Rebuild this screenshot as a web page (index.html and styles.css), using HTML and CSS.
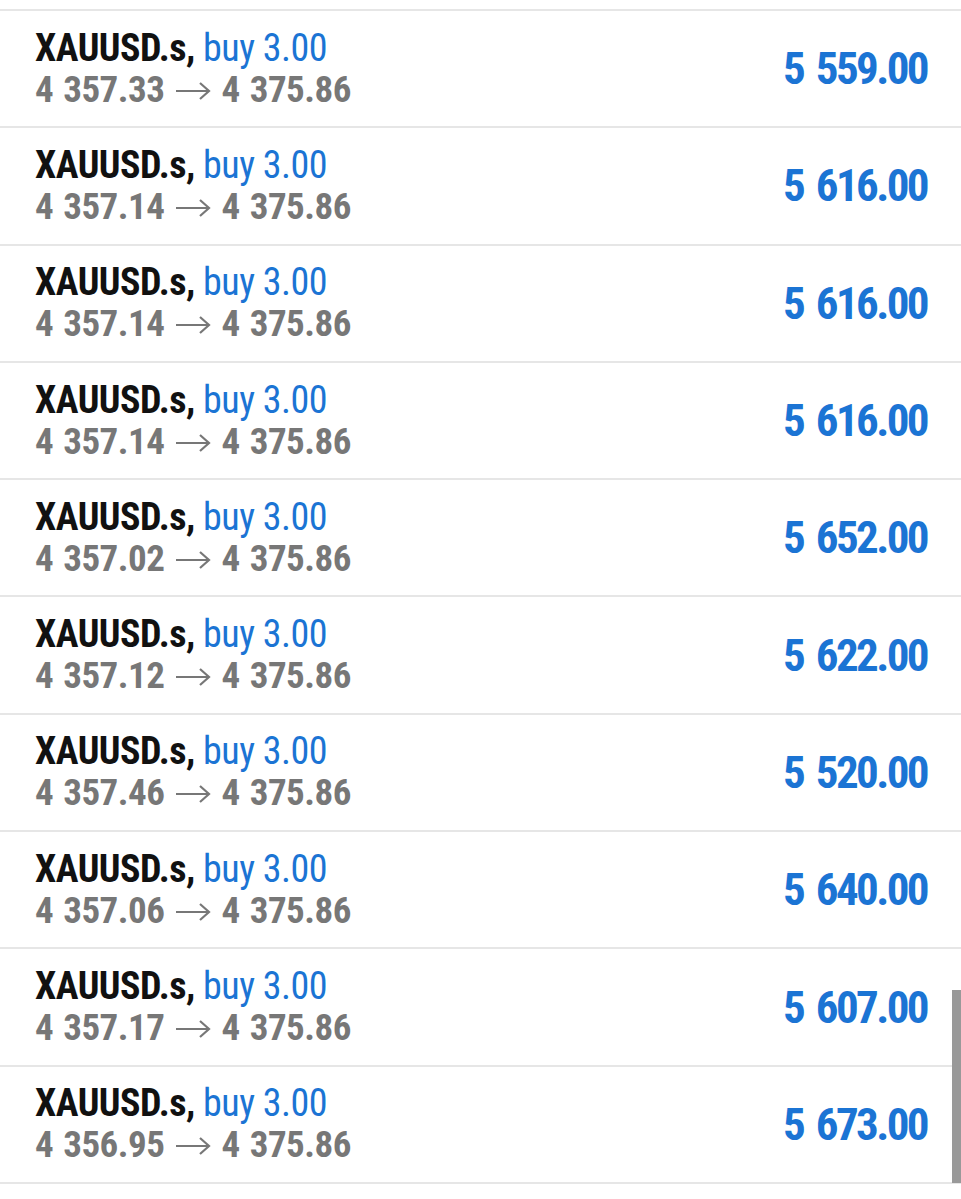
FILE: index.html
```html
<!DOCTYPE html>
<html lang="en">
<head>
  <meta charset="UTF-8">
  <meta name="viewport" content="width=device-width, initial-scale=1.0">
  <title>Positions</title>
  <link rel="stylesheet" href="styles.css">
</head>
<body>
  <div class="list">
    <!-- positions -->
    <div class="row">
      <div class="info">
        <div class="title"><span class="symbol">XAUUSD.s,</span> <span class="side">buy 3.00</span></div>
        <div class="prices">4 357.33<svg class="arrow" viewBox="0 0 36 20"><path d="M1 10H34M25 2L34 10L25 18"/></svg>4 375.86</div>
      </div>
      <div class="profit">5 559.00</div>
    </div>
    <div class="row">
      <div class="info">
        <div class="title"><span class="symbol">XAUUSD.s,</span> <span class="side">buy 3.00</span></div>
        <div class="prices">4 357.14<svg class="arrow" viewBox="0 0 36 20"><path d="M1 10H34M25 2L34 10L25 18"/></svg>4 375.86</div>
      </div>
      <div class="profit">5 616.00</div>
    </div>
    <div class="row">
      <div class="info">
        <div class="title"><span class="symbol">XAUUSD.s,</span> <span class="side">buy 3.00</span></div>
        <div class="prices">4 357.14<svg class="arrow" viewBox="0 0 36 20"><path d="M1 10H34M25 2L34 10L25 18"/></svg>4 375.86</div>
      </div>
      <div class="profit">5 616.00</div>
    </div>
    <div class="row">
      <div class="info">
        <div class="title"><span class="symbol">XAUUSD.s,</span> <span class="side">buy 3.00</span></div>
        <div class="prices">4 357.14<svg class="arrow" viewBox="0 0 36 20"><path d="M1 10H34M25 2L34 10L25 18"/></svg>4 375.86</div>
      </div>
      <div class="profit">5 616.00</div>
    </div>
    <div class="row">
      <div class="info">
        <div class="title"><span class="symbol">XAUUSD.s,</span> <span class="side">buy 3.00</span></div>
        <div class="prices">4 357.02<svg class="arrow" viewBox="0 0 36 20"><path d="M1 10H34M25 2L34 10L25 18"/></svg>4 375.86</div>
      </div>
      <div class="profit">5 652.00</div>
    </div>
    <div class="row">
      <div class="info">
        <div class="title"><span class="symbol">XAUUSD.s,</span> <span class="side">buy 3.00</span></div>
        <div class="prices">4 357.12<svg class="arrow" viewBox="0 0 36 20"><path d="M1 10H34M25 2L34 10L25 18"/></svg>4 375.86</div>
      </div>
      <div class="profit">5 622.00</div>
    </div>
    <div class="row">
      <div class="info">
        <div class="title"><span class="symbol">XAUUSD.s,</span> <span class="side">buy 3.00</span></div>
        <div class="prices">4 357.46<svg class="arrow" viewBox="0 0 36 20"><path d="M1 10H34M25 2L34 10L25 18"/></svg>4 375.86</div>
      </div>
      <div class="profit">5 520.00</div>
    </div>
    <div class="row">
      <div class="info">
        <div class="title"><span class="symbol">XAUUSD.s,</span> <span class="side">buy 3.00</span></div>
        <div class="prices">4 357.06<svg class="arrow" viewBox="0 0 36 20"><path d="M1 10H34M25 2L34 10L25 18"/></svg>4 375.86</div>
      </div>
      <div class="profit">5 640.00</div>
    </div>
    <div class="row">
      <div class="info">
        <div class="title"><span class="symbol">XAUUSD.s,</span> <span class="side">buy 3.00</span></div>
        <div class="prices">4 357.17<svg class="arrow" viewBox="0 0 36 20"><path d="M1 10H34M25 2L34 10L25 18"/></svg>4 375.86</div>
      </div>
      <div class="profit">5 607.00</div>
    </div>
    <div class="row">
      <div class="info">
        <div class="title"><span class="symbol">XAUUSD.s,</span> <span class="side">buy 3.00</span></div>
        <div class="prices">4 356.95<svg class="arrow" viewBox="0 0 36 20"><path d="M1 10H34M25 2L34 10L25 18"/></svg>4 375.86</div>
      </div>
      <div class="profit">5 673.00</div>
    </div>
  </div>
  <div class="scrollbar"></div>
</body>
</html>
```

FILE: styles.css
```css
body {
  margin: 0;
  background: #fff;
  font-family: "Roboto Condensed", Roboto, sans-serif;
  font-stretch: 75%;
}
.list {
  padding-top: 9px;
}
.row {
  display: flex;
  align-items: center;
  justify-content: space-between;
  height: 115.3px;
  padding: 0 34px 0 35px;
  border-top: 2px solid #e6e6e6;
}
.row:last-child { border-bottom: 2px solid #e6e6e6; }
.info { line-height: 42px; }
.title { font-size: 38px; letter-spacing: -0.5px; }
.symbol { font-weight: bold; color: #111; }
.side { color: #1b74d4; }
.prices {
  display: flex;
  align-items: center;
  font-size: 37px;
  font-weight: bold;
  color: #777;
  letter-spacing: -0.5px;
  word-spacing: 2px;
}
.arrow {
  width: 36px;
  height: 20px;
  margin: 2px 10px 0 11px;
  fill: none;
  stroke: #777;
  stroke-width: 2.2;
}
.profit {
  font-size: 45px;
  font-weight: bold;
  color: #1b74d4;
  letter-spacing: -2.6px;
  word-spacing: 5px;
}
.scrollbar {
  position: absolute;
  top: 990px;
  right: 0;
  width: 9px;
  height: 193px;
  background: #999;
}
```
